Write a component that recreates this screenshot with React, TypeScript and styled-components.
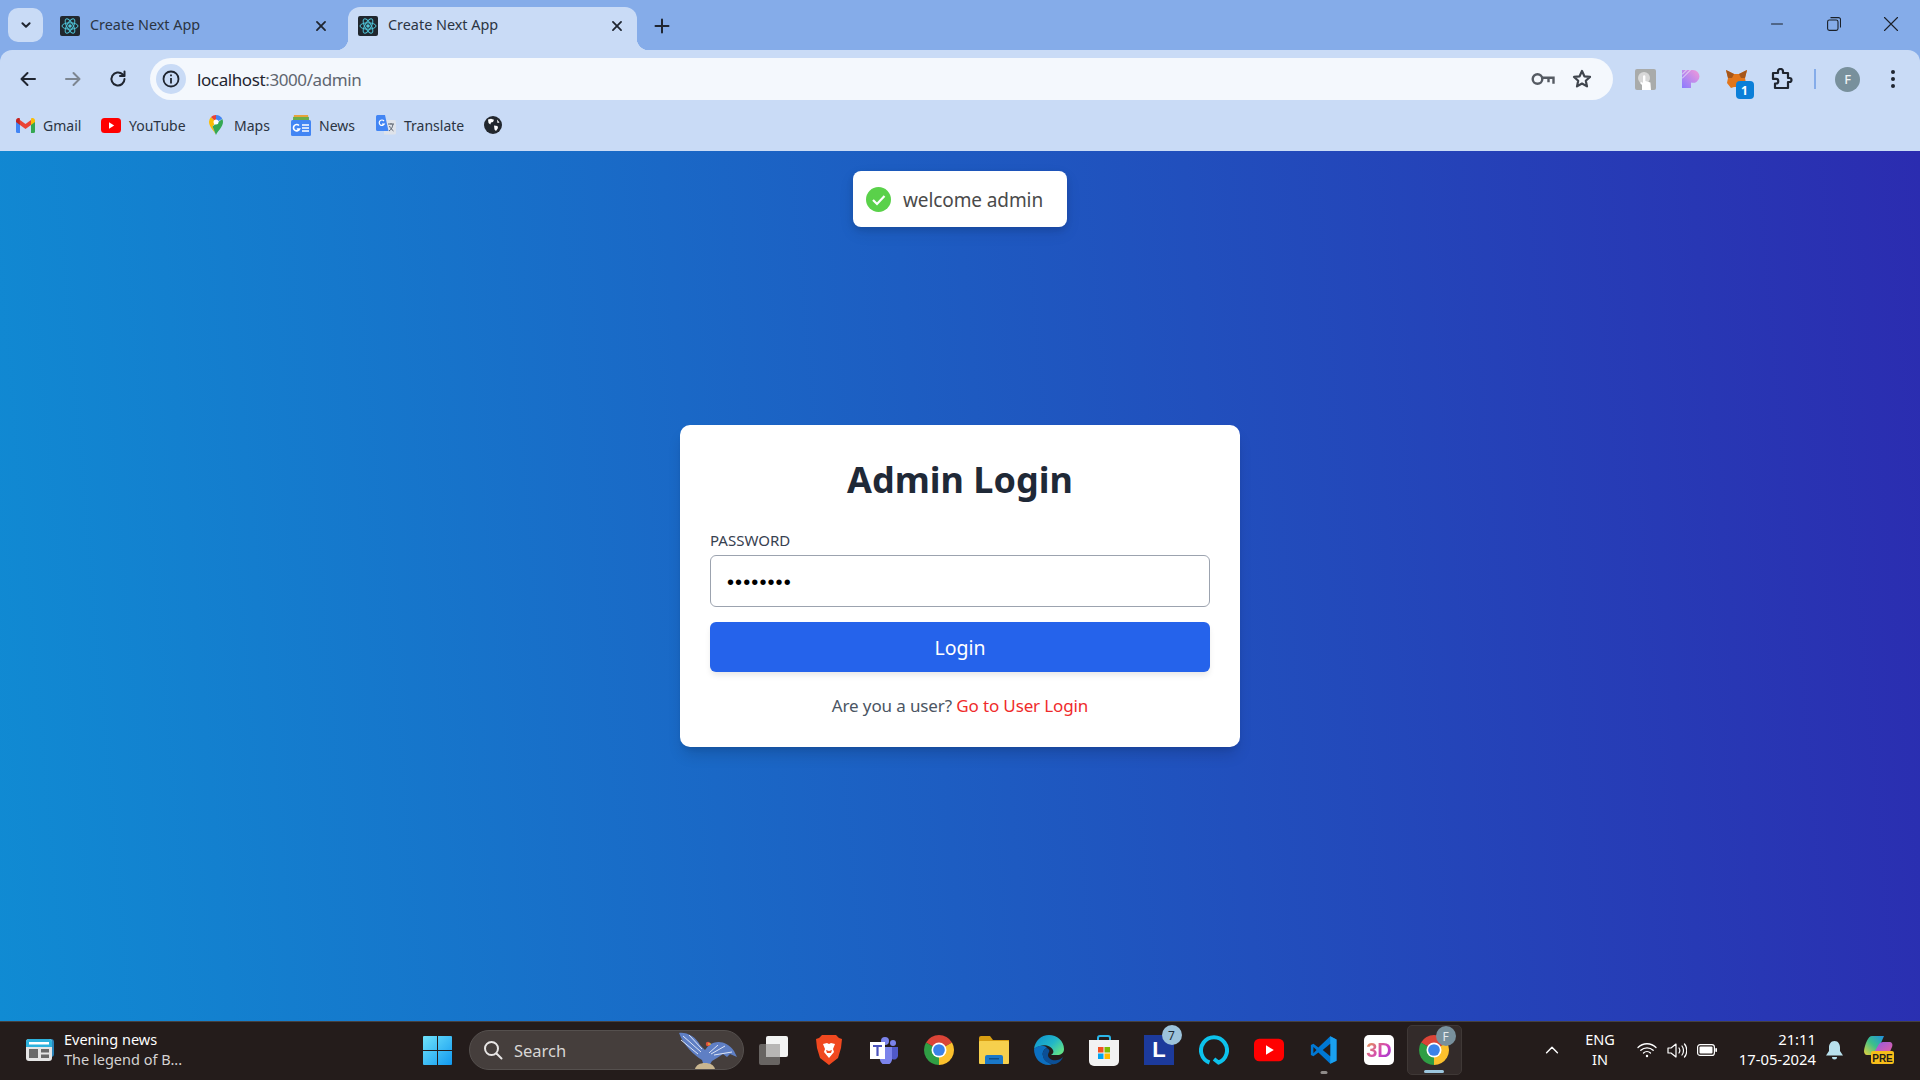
import React from "react";
import styled, { createGlobalStyle } from "styled-components";

const GlobalStyle = createGlobalStyle`
  html, body { margin: 0; padding: 0; height: 100%; overflow: hidden; }
  body { font-family: "Noto Sans", "Open Sans", sans-serif; }
  * { box-sizing: border-box; }
`;

const Screen = styled.div`
  width: 1920px;
  height: 1080px;
  display: flex;
  flex-direction: column;
  background: #85ace9;
`;

/* ---------- tab strip ---------- */
const TabStrip = styled.div`
  height: 50px;
  display: flex;
  align-items: flex-end;
  padding-left: 8px;
  flex: none;
`;
const TabSearch = styled.div`
  width: 35px;
  height: 34px;
  margin-bottom: 8px;
  border-radius: 10px;
  background: #c9dbf6;
  display: flex;
  align-items: center;
  justify-content: center;
`;
const Tab = styled.div<{ $active?: boolean }>`
  position: relative;
  width: ${(p) => (p.$active ? 289 : 305)}px;
  height: 43px;
  padding: 0 ${(p) => (p.$active ? 11 : 18)}px 6px ${(p) => (p.$active ? 10 : 17)}px;
  display: flex;
  align-items: center;
  border-radius: 12px 12px 0 0;
  background: ${(p) => (p.$active ? "#c9dbf6" : "transparent")};
  color: #2b3442;
  font-size: 14.4px;
  ${(p) =>
    p.$active &&
    `
    &::before, &::after {
      content: "";
      position: absolute;
      bottom: 0;
      width: 12px;
      height: 12px;
    }
    &::before { left: -12px; background: radial-gradient(circle at 0 0, transparent 12px, #c9dbf6 12.5px); }
    &::after { right: -12px; background: radial-gradient(circle at 100% 0, transparent 12px, #c9dbf6 12.5px); }
  `}
`;
const TabTitle = styled.span`
  margin: 0 0 2px 10px;
  flex: 1;
`;
const NewTab = styled.div`
  width: 50px;
  height: 42px;
  display: flex;
  align-items: center;
  justify-content: center;
  color: #1f2530;
  margin-bottom: 3px;
`;
const WindowControls = styled.div`
  margin-left: auto;
  height: 50px;
  padding-right: 1px;
  display: flex;
  align-items: center;
`;
const WindowButton = styled.div`
  width: 57px;
  height: 50px;
  display: flex;
  align-items: center;
  justify-content: center;
  padding-bottom: 2px;
`;

/* ---------- toolbar ---------- */
const Toolbar = styled.div`
  height: 50px;
  flex: none;
  display: flex;
  align-items: center;
  padding: 8px 4px 0 5px;
  background: #c9dbf6;
  border-radius: 12px 12px 0 0;
`;
const NavButton = styled.div`
  width: 45px;
  height: 42px;
  display: flex;
  align-items: center;
  justify-content: center;
  flex: none;
`;
const Omnibox = styled.div`
  flex: 1;
  height: 42px;
  margin-left: 10px;
  margin-right: 10px;
  padding: 0 12px 0 6px;
  border-radius: 21px;
  background: #f4f8fd;
  display: flex;
  align-items: center;
`;
const SiteInfo = styled.div`
  width: 30px;
  height: 30px;
  border-radius: 50%;
  background: #c9dbf6;
  display: flex;
  align-items: center;
  justify-content: center;
  margin-right: 11px;
`;
const Url = styled.div`
  flex: 1;
  font-size: 17px;
  letter-spacing: -0.4px;
  color: #5f6670;
  span { color: #1f2530; }
`;
const OmniIcon = styled.div`
  width: 39px;
  display: flex;
  justify-content: center;
`;
const ExtSlot = styled.div`
  position: relative;
  width: 45.5px;
  height: 42px;
  display: flex;
  align-items: center;
  justify-content: center;
  flex: none;
`;
const ExtBadge = styled.div`
  position: absolute;
  right: 6px;
  bottom: 1px;
  width: 18px;
  height: 18px;
  border-radius: 4px;
  background: #0b7fd8;
  color: #fff;
  font-size: 12px;
  font-weight: 700;
  display: flex;
  align-items: center;
  justify-content: center;
`;
const ToolbarDivider = styled.div`
  width: 2px;
  height: 20px;
  background: #85ace9;
  margin: 0 9px;
  flex: none;
`;
const Avatar = styled.div`
  width: 25px;
  height: 25px;
  border-radius: 50%;
  background: #78909c;
  color: #eef2f4;
  font-size: 13px;
  font-weight: 500;
  display: flex;
  align-items: center;
  justify-content: center;
`;

/* ---------- bookmarks ---------- */
const BookmarkBar = styled.div`
  height: 51px;
  flex: none;
  display: flex;
  align-items: center;
  padding: 0 0 1px 16px;
  background: #c9dbf6;
`;
const Bookmark = styled.div<{ $w: number; $gap?: number }>`
  width: ${(p) => p.$w}px;
  display: flex;
  align-items: center;
  gap: ${(p) => p.$gap ?? 8}px;
  font-size: 14px;
  color: #2b3442;
  flex: none;
`;

/* ---------- page ---------- */
const Main = styled.main`
  position: relative;
  flex: 1;
  display: flex;
  align-items: center;
  justify-content: center;
  background: linear-gradient(85deg, #108bd3, #2b2cb0);
`;
const Toast = styled.div`
  position: absolute;
  top: 20px;
  left: 853px;
  width: 214px;
  height: 56px;
  padding-left: 13px;
  display: flex;
  align-items: center;
  gap: 12px;
  border-radius: 8px;
  background: #fff;
  color: #4a4a4a;
  font-size: 19px;
  letter-spacing: -0.1px;
  box-shadow: 0 6px 16px rgba(0, 0, 0, 0.08), 0 3px 6px rgba(0, 0, 0, 0.12);
`;
const ToastText = styled.span`
  padding-top: 2px;
`;
const Card = styled.div`
  width: 560px;
  height: 322px;
  padding: 30px;
  border-radius: 10px;
  background: #fff;
  box-shadow: 0 10px 15px -3px rgba(0, 0, 0, 0.15), 0 4px 6px -4px rgba(0, 0, 0, 0.15);
`;
const Title = styled.h1`
  margin: 0 0 26px;
  height: 48px;
  line-height: 50px;
  text-align: center;
  font-size: 36px;
  font-weight: 700;
  color: #1f2937;
`;
const Label = styled.label`
  display: block;
  height: 22px;
  margin-bottom: 4px;
  line-height: 22px;
  font-size: 15px;
  color: #374151;
`;
const PasswordInput = styled.input`
  display: block;
  width: 100%;
  height: 52px;
  padding: 2px 16px 0;
  border: 1px solid #9ca3af;
  border-radius: 6px;
  font-size: 20px;
  letter-spacing: 1.1px;
  color: #000;
  background: #fff;
  outline: none;
`;
const LoginButton = styled.button`
  display: block;
  width: 100%;
  height: 50px;
  margin-top: 15px;
  border: 0;
  border-radius: 6px;
  background: #2563eb;
  color: #fff;
  font: 400 19.5px "Noto Sans", sans-serif;
  box-shadow: 0 4px 6px -1px rgba(0, 0, 0, 0.1);
`;
const Hint = styled.p`
  margin: 22px 0 0;
  text-align: center;
  font-size: 17px;
  letter-spacing: -0.13px;
  line-height: 24px;
  color: #4b5563;
  a { color: #ef2b2b; text-decoration: none; }
`;

/* ---------- taskbar ---------- */
const Taskbar = styled.footer`
  height: 59px;
  flex: none;
  display: flex;
  align-items: center;
  padding-bottom: 2px;
  background: #241c1b;
  border-top: 1px solid #45403f;
`;
const NewsWidget = styled.div`
  width: 410px;
  padding-left: 26px;
  display: flex;
  align-items: center;
  gap: 10px;
  flex: none;
`;
const NewsText = styled.div`
  margin-bottom: 2px;
  font-size: 14.5px;
  line-height: 20px;
  color: #fff;
  div + div { color: #d5d3d2; }
`;
const StartSlot = styled.div`
  width: 55px;
  display: flex;
  justify-content: center;
  flex: none;
`;
const SearchBox = styled.div`
  width: 275px;
  height: 40px;
  margin: 0 2.5px 0 4px;
  padding: 0 5px 0 13px;
  border-radius: 20px;
  background: #453e3c;
  border: 1px solid #55504e;
  display: flex;
  align-items: center;
  gap: 11px;
  color: #d8d6d5;
  font-size: 16.5px;
  flex: none;
  span { flex: 1; }
`;
const AppSlot = styled.div<{ $active?: boolean }>`
  position: relative;
  width: 55px;
  height: 50px;
  display: flex;
  align-items: center;
  justify-content: center;
  flex: none;
  ${(p) =>
    p.$active &&
    `background: #332b2a; border: 1px solid #3f3836; border-radius: 5px;`}
`;
const RunDot = styled.div<{ $active?: boolean }>`
  position: absolute;
  bottom: 1px;
  left: 50%;
  transform: translateX(-50%);
  width: ${(p) => (p.$active ? 20 : 7)}px;
  height: 3px;
  border-radius: 2px;
  background: ${(p) => (p.$active ? "#9cc6de" : "#8f8b89")};
`;
const CountBadge = styled.div<{ $grey?: boolean }>`
  position: absolute;
  top: 0;
  right: 5px;
  width: 20px;
  height: 20px;
  border-radius: 50%;
  background: ${(p) => (p.$grey ? "#78909c" : "#9cc3db")};
  color: ${(p) => (p.$grey ? "#e6eaec" : "#1d2a33")};
  font-size: 12px;
  display: flex;
  align-items: center;
  justify-content: center;
`;
const Tray = styled.div`
  margin-left: auto;
  display: flex;
  align-items: center;
  color: #fff;
`;
const TraySlot = styled.div<{ $w: number }>`
  width: ${(p) => p.$w}px;
  display: flex;
  justify-content: center;
  flex: none;
`;
const Lang = styled.div`
  margin-bottom: 2px;
  text-align: center;
  font-size: 14.5px;
  line-height: 20px;
`;
const Clock = styled.div`
  width: 94px;
  margin-bottom: 2px;
  text-align: right;
  font-size: 14.8px;
  line-height: 20px;
  white-space: nowrap;
  flex: none;
`;

/* ---------- drawn icons ---------- */
const Stroke = { fill: "none", stroke: "currentColor", strokeLinecap: "round", strokeLinejoin: "round" } as const;

const ReactFav = () => (
  <svg width="20" height="20" viewBox="0 0 20 20">
    <rect width="20" height="20" rx="2" fill="#20272e" />
    <g fill="none" stroke="#4fc4d8" strokeWidth="1">
      <ellipse cx="10" cy="10" rx="8" ry="3.2" />
      <ellipse cx="10" cy="10" rx="8" ry="3.2" transform="rotate(60 10 10)" />
      <ellipse cx="10" cy="10" rx="8" ry="3.2" transform="rotate(120 10 10)" />
    </g>
    <circle cx="10" cy="10" r="1.8" fill="#4fc4d8" />
  </svg>
);
const Glyph = ({ d, color = "#1f2530", w = 2, size = 20 }: { d: string; color?: string; w?: number; size?: number }) => (
  <svg width={size} height={size} viewBox="0 0 20 20" style={{ color }}>
    <path d={d} strokeWidth={w} {...Stroke} />
  </svg>
);
const Chrome = ({ size = 30 }: { size?: number }) => (
  <svg width={size} height={size} viewBox="4 4 40 40">
    <path d="M24 24L6.68 14A20 20 0 0 1 41.32 14Z" fill="#db4437" />
    <path d="M24 24L41.32 14A20 20 0 0 1 24 44Z" fill="#fbc02d" />
    <path d="M24 24L24 44A20 20 0 0 1 6.68 14Z" fill="#2f9e44" />
    <circle cx="24" cy="24" r="10" fill="#fff" />
    <circle cx="24" cy="24" r="7.8" fill="#3b82e8" />
  </svg>
);
const Gmail = () => (
  <svg width="19" height="15" viewBox="0 0 19 15">
    <path d="M0 2v11.5A1.5 1.5 0 0 0 1.5 15H4V6z" fill="#4285f4" />
    <path d="M19 2v11.5a1.5 1.5 0 0 1-1.5 1.5H15V6z" fill="#34a853" />
    <path d="M4 7V2l5.5 4L15 2v5l-5.5 4z" fill="#ea4335" />
    <path d="M0 2.5C0 .5 2.3-.6 3.9.6L4 7 0 4z" fill="#c5221f" />
    <path d="M19 2.5c0-2-2.3-3.1-3.9-1.9L15 7l4-3z" fill="#fbbc04" />
  </svg>
);
const YouTube = ({ w = 20, h = 15 }: { w?: number; h?: number }) => (
  <svg width={w} height={h} viewBox="0 0 20 15">
    <rect width="20" height="15" rx="3.5" fill="#f00" />
    <path d="M8 4.3v6.4l5.2-3.2z" fill="#fff" />
  </svg>
);
const Maps = () => (
  <svg width="14" height="20" viewBox="0 0 14 20">
    <path d="M7 20C5.5 16 0 12 0 7a7 7 0 0 1 2-5l5 5-3.5 4.5z" fill="#fbbc04" />
    <path d="M7 20c1.5-4 7-8 7-13 0-1-.2-2-.7-3L3.5 11.500z" fill="#34a853" />
    <path d="M2 2a7 7 0 0 1 5-2v7z" fill="#ea4335" />
    <path d="M7 0a7 7 0 0 1 6.300 4L7 7z" fill="#4285f4" />
    <circle cx="7" cy="7" r="2.500" fill="#fff" />
  </svg>
);
const News = () => (
  <svg width="20" height="21" viewBox="0 0 20 21">
    <path d="M3 0h14l1 6H2z" fill="#e8a33a" />
    <path d="M2 2h16v4H2z" fill="#4caf50" opacity=".8" />
    <rect y="5" width="20" height="16" rx="1.500" fill="#4285f4" />
    <path d="M8 10.500A3.200 3.200 0 1 0 8.600 14H5.800" fill="none" stroke="#fff" strokeWidth="1.600" />
    <path d="M11 10h7M11 13h7M11 16h7" stroke="#fff" strokeWidth="1.500" />
  </svg>
);
const Translate = () => (
  <svg width="20" height="21" viewBox="0 0 20 21">
    <path d="M8 5h10.500a1.500 1.500 0 0 1 1.500 1.500V18a1.500 1.500 0 0 1-1.500 1.500H8z" fill="#dfe3ea" />
    <path d="M12 9h6M15 8v1.500M13 16c2.500-1.500 3.500-4 4-7M13.500 11c.8 2 2 3.500 4 5" stroke="#5f6670" strokeWidth="1" fill="none" />
    <path d="M1.500 0H9l3.500 16H1.500A1.500 1.500 0 0 1 0 14.500v-13A1.500 1.500 0 0 1 1.500 0z" fill="#4285f4" />
    <path d="M8 6a2.700 2.700 0 1 0 .3 3H6" fill="none" stroke="#fff" strokeWidth="1.200" />
  </svg>
);
const Globe = () => (
  <svg width="18" height="18" viewBox="0 0 18 18">
    <circle cx="9" cy="9" r="9" fill="#22272e" />
    <path d="M4 3.500l3-.8 3 1-1 2.300-2 .5-.7 2-1.800-1.500zM10 9.500l3.500.5.500 2-2 3-1.500-1.500zM13 3.500l2.500 3-2 .5z" fill="#fff" />
  </svg>
);
const Key = () => (
  <svg width="24" height="14" viewBox="0 0 24 14" fill="none" stroke="#555b63" strokeWidth="2.400">
    <circle cx="6.500" cy="7" r="4.800" />
    <path d="M11 5.800h11.500v6M17.500 5.800v4.500" />
  </svg>
);
const Star = () => (
  <svg width="20" height="20" viewBox="0 0 20 20" fill="none" stroke="#3f454d" strokeWidth="2.200" strokeLinejoin="round">
    <path d="M10 2l2.400 5.300 5.600.6-4.200 3.800 1.200 5.700L10 14.500l-5 2.900 1.200-5.700L2 7.900l5.600-.6z" />
  </svg>
);
const TouchExt = () => (
  <svg width="21" height="21" viewBox="0 0 21 21">
    <rect width="21" height="21" rx="2" fill="#a9abaa" />
    <circle cx="9" cy="9" r="6" fill="#d8d8d8" />
    <path d="M7 21v-5l-2-2 1.500-1 1.500 1V7.500a1.200 1.200 0 0 1 2.400 0V12l5 1.500.6 7.500z" fill="#fff" />
  </svg>
);
const PurpleExt = () => (
  <svg width="18" height="18" viewBox="0 0 18 18">
    <defs>
      <linearGradient id="purpleExt" x1="0" y1="1" x2="1" y2="0">
        <stop offset="0" stopColor="#8a7bff" />
        <stop offset="1" stopColor="#f49ad8" />
      </linearGradient>
    </defs>
    <path d="M0 0h11a6.500 6.500 0 0 1 6.500 6.500A6.500 6.500 0 0 1 9 12.500V18H0z" fill="url(#purpleExt)" />
    <path d="M0 4.500L4.500 0M0 8.500L8.500 0" stroke="#e7e2f7" strokeWidth="1" />
  </svg>
);
const Fox = () => (
  <svg width="21" height="20" viewBox="0 0 21 20">
    <path d="M0 1l8 4h5l8-4-2 8 1 5-4 5-3-1H8l-3 1-4-5 1-5z" fill="#e2761b" />
    <path d="M0 1l8 4-2 4-4 0zM21 1l-8 4 2 4 4 0z" fill="#a5561a" />
  </svg>
);
const Puzzle = () => (
  <svg width="22" height="22" viewBox="0 0 22 22" fill="none" stroke="#1f2530" strokeWidth="2.200" strokeLinejoin="round">
    <path d="M2 5h5V3.500a2.500 2.500 0 0 1 5 0V5h5v5h1.500a2 2 0 0 1 0 4H17v6H4v-4.500h1a2.300 2.300 0 0 0 0-4.600H2z" />
  </svg>
);
const WindowsLogo = () => (
  <svg width="29" height="29" viewBox="0 0 29 29">
    <defs>
      <linearGradient id="winLogo" x1="0" y1="0" x2="1" y2="1">
        <stop offset="0" stopColor="#6fe3fb" />
        <stop offset="1" stopColor="#1199f0" />
      </linearGradient>
    </defs>
    <path d="M0 1a1 1 0 0 1 1-1h13v14H0zM15 0h13a1 1 0 0 1 1 1v13H15zM0 15h14v14H1a1 1 0 0 1-1-1zM15 15h14v13a1 1 0 0 1-1 1H15z" fill="url(#winLogo)" />
  </svg>
);
const NewsIcon = () => (
  <svg width="28" height="22" viewBox="0 0 28 22">
    <rect x="2" width="26" height="18" rx="3" fill="#2a83b8" />
    <rect width="26" height="22" rx="3" fill="#e6e6e6" />
    <path d="M0 3a3 3 0 0 1 3-3h20a3 3 0 0 1 3 3v5H0z" fill="#2db2dd" />
    <rect x="3" y="3" width="20" height="2.500" fill="#fff" />
    <rect x="3" y="10" width="9" height="9" fill="#6a6a6a" />
    <rect x="15" y="10" width="8" height="3.500" fill="#6a6a6a" />
    <rect x="15" y="15.500" width="8" height="3.500" fill="#6a6a6a" />
  </svg>
);
const Bird = () => (
  <svg width="60" height="38" viewBox="0 0 60 38">
    <path d="M1 2c8-1 17 4 21 12l5 5 4-5c8-5 18-4 25 6l3 6-7-3-3 3-4-3-6 4-5 3-3 5h-5l-2-6C16 24 6 15 1 2z" fill="#5f7fc4" />
    <path d="M5 5l18 16M11 4l13 14M3 9l17 14M54 21l-18 3M47 15l-14 8M40 14l-9 8" stroke="#dde5f5" strokeWidth="1" />
    <circle cx="30" cy="13" r="2.200" fill="#e0533a" />
    <path d="M30 13l3 0" stroke="#e8c23a" strokeWidth="1.200" />
    <path d="M17 38c1-4 5-6 10-6s9 2 10 6z" fill="#c9b690" />
  </svg>
);
const Gallery = () => (
  <svg width="30" height="30" viewBox="0 0 30 30">
    <rect y="9" width="21" height="21" rx="2" fill="#686462" />
    <rect x="7" y="1" width="22" height="21" rx="2" fill="#f3f3f3" />
    <rect x="7" y="9" width="14" height="13" fill="#b8b6b5" />
  </svg>
);
const Brave = () => (
  <svg width="26" height="30" viewBox="0 0 26 30">
    <path d="M6 0h14l3 3 3 1-1 9-3 10-9 7-9-7-3-10-1-9 3-1z" fill="#f0481f" />
    <path d="M7 9l4-1 2 1 2-1 4 1-2 5 1 3-5 6-5-6 1-3z" fill="#fff" />
    <path d="M10 15l3 1 3-1-1 3h-4z" fill="#f0481f" />
  </svg>
);
const Teams = () => (
  <svg width="28" height="28" viewBox="0 0 28 28">
    <circle cx="23" cy="7" r="3" fill="#7b83eb" />
    <circle cx="15" cy="5" r="4" fill="#7b83eb" />
    <path d="M20 11h8v9a4 4 0 0 1-6 3z" fill="#5059c9" />
    <path d="M8 11h14v11a6 6 0 0 1-12 2z" fill="#7b83eb" />
    <rect y="6" width="15" height="17" fill="#fff" />
    <path d="M3 10h9M7.500 10v10" stroke="#4b53bc" strokeWidth="2.200" />
  </svg>
);
const Folder = () => (
  <svg width="30" height="28" viewBox="0 0 30 28">
    <path d="M0 2a2 2 0 0 1 2-2h9l3 4h16v6H0z" fill="#d99f12" />
    <rect y="5" width="30" height="23" rx="1" fill="#f6d04d" />
    <path d="M6 28v-7a2 2 0 0 1 2-2h14a2 2 0 0 1 2 2v7z" fill="#1a78c9" />
    <rect x="10" y="22" width="10" height="1.500" fill="#0e4f8a" />
  </svg>
);
const Edge = () => (
  <svg width="30" height="30" viewBox="0 0 30 30">
    <defs>
      <linearGradient id="edgeTop" x1="0" y1="0" x2="1" y2=".7">
        <stop offset="0" stopColor="#0c8fd0" />
        <stop offset=".6" stopColor="#22b6c8" />
        <stop offset="1" stopColor="#5fe08a" />
      </linearGradient>
    </defs>
    <path d="M0 14C1 6 7 0 15 0c8 0 15 6 15 14 0 4-3 6-7 6h-6c2-1 3-3 2-5-2-4-8-6-13-4-3 1-5 2-6 3z" fill="url(#edgeTop)" />
    <path d="M0 14c4-4 11-4 13-1-3 1-5 4-4 8 1 4 5 7 9 8-1 .7-2 1-3 1C6 30 0 23 0 14z" fill="#0c6fc0" />
    <path d="M13 13c2 1 3 3 2 4-.5 1-1 2-1 3 0 4 5 6 9 5 2 0 4-1 6-3-2 5-7 8-11 7-5-1-9-4-9-8-1-4 1-7 4-8z" fill="#0b4f96" />
  </svg>
);
const Store = () => (
  <svg width="30" height="31" viewBox="0 0 30 31">
    <path d="M9 6V3a2 2 0 0 1 2-2h8a2 2 0 0 1 2 2v3" fill="none" stroke="#2bb6e8" strokeWidth="2" />
    <path d="M0 5h30v21a5 5 0 0 1-5 5H5a5 5 0 0 1-5-5z" fill="#f2f2f2" />
    <rect x="9" y="12" width="5.500" height="5.500" fill="#f25022" />
    <rect x="15.500" y="12" width="5.500" height="5.500" fill="#7fba00" />
    <rect x="9" y="18.500" width="5.500" height="5.500" fill="#00a4ef" />
    <rect x="15.500" y="18.500" width="5.500" height="5.500" fill="#ffb900" />
  </svg>
);
const Alexa = () => (
  <svg width="30" height="30" viewBox="0 0 30 30">
    <path d="M10.500 27.500A13 13 0 1 1 19.500 27.500L15 24" fill="none" stroke="#0dc2ec" strokeWidth="4" />
  </svg>
);
const VsCode = () => (
  <svg width="30" height="30" viewBox="0 0 24 24">
    <path d="M17 1l5 2.500v17L17 23 7.500 14 3.500 17 1.500 16V8l2-1 4 3z" fill="#0078d4" />
    <path d="M17 1l5 2.500v17L17 23z" fill="#1aa0ef" />
    <path d="M17 7l-6 5 6 5z" fill="#241c1b" />
    <path d="M3.500 9.500L6 12l-2.500 2.500z" fill="#241c1b" />
  </svg>
);
const LIcon = styled.div`
  width: 30px;
  height: 30px;
  background: #1c3a9c;
  color: #fff;
  font: 700 22px "Liberation Sans", sans-serif;
  display: flex;
  align-items: center;
  justify-content: center;
`;
const ThreeDIcon = styled.div`
  width: 30px;
  height: 30px;
  border-radius: 5px;
  background: #fff;
  font: 700 20px "Liberation Sans", sans-serif;
  display: flex;
  align-items: center;
  justify-content: center;
  span {
    background: linear-gradient(135deg, #e8a040, #d040c0 60%, #8040d0);
    -webkit-background-clip: text;
    background-clip: text;
    color: transparent;
  }
`;
const Wifi = () => (
  <svg width="20" height="16" viewBox="0 0 20 16" fill="none" stroke="#fff" strokeWidth="1.300" strokeLinecap="round">
    <path d="M1 5.500c5-5 13-5 18 0M3.800 8.300c3.500-3.300 9-3.300 12.400 0M6.500 11c2-1.800 5-1.800 7 0" />
    <circle cx="10" cy="14" r="1.200" fill="#fff" stroke="none" />
  </svg>
);
const Volume = () => (
  <svg width="20" height="17" viewBox="0 0 20 17" fill="none" stroke="#fff" strokeWidth="1.200" strokeLinejoin="round" strokeLinecap="round">
    <path d="M1 6v5h3l5 4V2L4 6z" />
    <path d="M12 6c1 1.500 1 3.500 0 5M15 4c2 2.500 2 6.500 0 9M17.500 2c3 3.500 3 9.500 0 13" />
  </svg>
);
const Battery = () => (
  <svg width="20" height="12" viewBox="0 0 20 12">
    <rect x=".6" y=".6" width="16.800" height="10.800" rx="2.500" fill="none" stroke="#fff" strokeWidth="1.200" />
    <rect x="2.500" y="2.500" width="13" height="7" rx="1" fill="#fff" />
    <rect x="18.300" y="4" width="1.700" height="4" rx=".8" fill="#fff" />
  </svg>
);
const Bell = () => (
  <svg width="17" height="19" viewBox="0 0 17 19">
    <path d="M8.500 0C4.500 0 3 3.500 3 6.500V10l-3 4.500h17L14 10V6.500C14 3.500 12.500 0 8.500 0z" fill="#b9e1ee" />
    <path d="M6 16h5a2.500 2.500 0 0 1-5 0z" fill="#b9e1ee" />
  </svg>
);
const Copilot = () => (
  <svg width="30" height="28" viewBox="0 0 30 28">
    <defs>
      <linearGradient id="copL" x1="0" y1="1" x2="1" y2="0">
        <stop offset="0" stopColor="#e8d23a" />
        <stop offset=".5" stopColor="#3cc08a" />
        <stop offset="1" stopColor="#1f8fe0" />
      </linearGradient>
      <linearGradient id="copR" x1="0" y1="0" x2="1" y2="1">
        <stop offset="0" stopColor="#8a5be8" />
        <stop offset="1" stopColor="#f0609a" />
      </linearGradient>
    </defs>
    <path d="M8 0h12l-7 16c-1 3-3 3-5 3H3c-2 0-3-2-3-4C1 8 4 0 8 0z" fill="url(#copL)" />
    <path d="M15 8c2-2 4-2 5-2h5c3 0 4 2 3 5l-3 7c-1 1-2 2-4 2H8z" fill="url(#copR)" />
    <rect x="7" y="15" width="23" height="13" rx="2" fill="#f7bd1a" />
    <text x="18.500" y="25.500" textAnchor="middle" fontSize="10" fontWeight="700" fill="#241c1b" fontFamily="Liberation Sans">PRE</text>
  </svg>
);

const App: React.FC = () => (
  <Screen>
    <GlobalStyle />
    <TabStrip>
      <TabSearch>
        <Glyph d="M6 8l4 4 4-4" w={2.200} size={18} />
      </TabSearch>
      <Tab>
        <ReactFav />
        <TabTitle>Create Next App</TabTitle>
        <Glyph d="M5.500 5.500l9 9M14.500 5.500l-9 9" w={2} size={18} />
      </Tab>
      <Tab $active>
        <ReactFav />
        <TabTitle>Create Next App</TabTitle>
        <Glyph d="M5.500 5.500l9 9M14.500 5.500l-9 9" w={2} size={18} />
      </Tab>
      <NewTab>
        <Glyph d="M10 3.500v13M3.500 10h13" w={2} />
      </NewTab>
      <WindowControls>
        <WindowButton>
          <Glyph d="M4.500 10h11" w={1} color="#1b2028" />
        </WindowButton>
        <WindowButton>
          <svg width="14" height="14" viewBox="0 0 14 14" fill="none" stroke="#1b2028" strokeWidth="1.100">
            <rect x=".6" y="3" width="10.400" height="10.400" rx="1.800" />
            <path d="M3.500 .6h8a2 2 0 0 1 2 2v8" />
          </svg>
        </WindowButton>
        <WindowButton>
          <Glyph d="M3.500 3.500l13 13M16.500 3.500l-13 13" w={1.100} color="#1b2028" />
        </WindowButton>
      </WindowControls>
    </TabStrip>

    <Toolbar>
      <NavButton>
        <Glyph d="M17 10H4M9.500 4l-6 6 6 6" w={2} />
      </NavButton>
      <NavButton>
        <Glyph d="M3 10h13M10.500 4l6 6-6 6" w={2} color="#7d8691" />
      </NavButton>
      <NavButton>
        <Glyph d="M16.500 10a6.500 6.500 0 1 1-2-4.700L16.500 7M16.500 2.500V7H12" w={2} />
      </NavButton>
      <Omnibox>
        <SiteInfo>
          <svg width="18" height="18" viewBox="0 0 18 18" fill="none" stroke="#1f2530" strokeWidth="1.800">
            <circle cx="9" cy="9" r="7.500" />
            <path d="M9 8v5.500M9 4.500v1.800" />
          </svg>
        </SiteInfo>
        <Url>
          <span>localhost</span>:3000/admin
        </Url>
        <OmniIcon>
          <Key />
        </OmniIcon>
        <OmniIcon>
          <Star />
        </OmniIcon>
      </Omnibox>
      <ExtSlot>
        <TouchExt />
      </ExtSlot>
      <ExtSlot>
        <PurpleExt />
      </ExtSlot>
      <ExtSlot>
        <Fox />
        <ExtBadge>1</ExtBadge>
      </ExtSlot>
      <ExtSlot>
        <Puzzle />
      </ExtSlot>
      <ToolbarDivider />
      <ExtSlot>
        <Avatar>F</Avatar>
      </ExtSlot>
      <ExtSlot>
        <svg width="6" height="20" viewBox="0 0 6 20" fill="#1f2530">
          <circle cx="3" cy="3" r="2" />
          <circle cx="3" cy="10" r="2" />
          <circle cx="3" cy="17" r="2" />
        </svg>
      </ExtSlot>
    </Toolbar>

    <BookmarkBar>
      <Bookmark $w={85}>
        <Gmail />
        Gmail
      </Bookmark>
      <Bookmark $w={108}>
        <YouTube />
        YouTube
      </Bookmark>
      <Bookmark $w={82} $gap={11}>
        <Maps />
        Maps
      </Bookmark>
      <Bookmark $w={85}>
        <News />
        News
      </Bookmark>
      <Bookmark $w={108}>
        <Translate />
        Translate
      </Bookmark>
      <Globe />
    </BookmarkBar>

    <Main>
      <Toast>
        <svg width="25" height="25" viewBox="0 0 25 25">
          <circle cx="12.500" cy="12.500" r="12.500" fill="#5ad14a" />
          <path d="M7 13l4 4 7.500-8" fill="none" stroke="#fff" strokeWidth="2.200" />
        </svg>
        <ToastText>welcome admin</ToastText>
      </Toast>
      <Card>
        <Title>Admin Login</Title>
        <Label>PASSWORD</Label>
        <PasswordInput type="password" value="admin123" readOnly />
        <LoginButton>Login</LoginButton>
        <Hint>
          Are you a user? <a href="#user">Go to User Login</a>
        </Hint>
      </Card>
    </Main>

    <Taskbar>
      <NewsWidget>
        <NewsIcon />
        <NewsText>
          <div>Evening news</div>
          <div>The legend of B...</div>
        </NewsText>
      </NewsWidget>
      <StartSlot>
        <WindowsLogo />
      </StartSlot>
      <SearchBox>
        <svg width="20" height="20" viewBox="0 0 20 20" fill="none" stroke="#e8e6e5" strokeWidth="2" strokeLinecap="round">
          <circle cx="8.500" cy="8.500" r="6.500" />
          <path d="M13.500 13.500l5 5" />
        </svg>
        <span>Search</span>
        <Bird />
      </SearchBox>
      <AppSlot><Gallery /></AppSlot>
      <AppSlot><Brave /></AppSlot>
      <AppSlot><Teams /></AppSlot>
      <AppSlot><Chrome /></AppSlot>
      <AppSlot><Folder /></AppSlot>
      <AppSlot><Edge /></AppSlot>
      <AppSlot><Store /></AppSlot>
      <AppSlot>
        <LIcon>L</LIcon>
        <CountBadge>7</CountBadge>
      </AppSlot>
      <AppSlot><Alexa /></AppSlot>
      <AppSlot><YouTube w={30} h={28} /></AppSlot>
      <AppSlot>
        <VsCode />
        <RunDot />
      </AppSlot>
      <AppSlot>
        <ThreeDIcon><span>3D</span></ThreeDIcon>
      </AppSlot>
      <AppSlot $active>
        <Chrome />
        <CountBadge $grey>F</CountBadge>
        <RunDot $active />
      </AppSlot>
      <Tray>
        <TraySlot $w={46}>
          <Glyph d="M4 13l6-6 6 6" w={1.600} color="#fff" size={18} />
        </TraySlot>
        <TraySlot $w={50}>
          <Lang>ENG<br />IN</Lang>
        </TraySlot>
        <TraySlot $w={7} />
        <TraySlot $w={30}><Wifi /></TraySlot>
        <TraySlot $w={30}><Volume /></TraySlot>
        <TraySlot $w={30}><Battery /></TraySlot>
        <Clock>
          21:11
          <br />
          17-05-2024
        </Clock>
        <TraySlot $w={36}><Bell /></TraySlot>
        <TraySlot $w={54}><Copilot /></TraySlot>
        <TraySlot $w={14} />
      </Tray>
    </Taskbar>
  </Screen>
);

export default App;
